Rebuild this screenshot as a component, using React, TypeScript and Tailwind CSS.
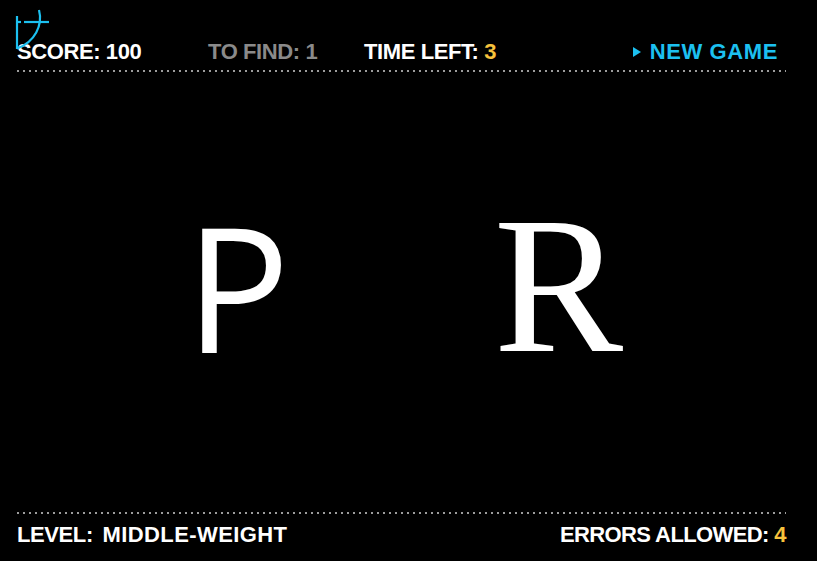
import React from 'react';

const sans = { fontFamily: '"Liberation Sans", Arial, sans-serif' };

const Dots = () => (
  <div className="h-[2px] w-full bg-[linear-gradient(to_right,#9c9c9c_2px,transparent_2px)] bg-[length:6px_2px]" />
);

const Crosshair = () => (
  <svg className="absolute left-0 top-0" width="60" height="52" viewBox="0 0 60 52" fill="none">
    <g stroke="#1cc0f0" strokeWidth="2.2">
      <line x1="17" y1="16" x2="17" y2="49" />
      <line x1="17" y1="22" x2="21" y2="22" />
      <line x1="24" y1="22" x2="49" y2="22" />
      <path d="M39 10 C 43 25 35 42 17 48.5" />
    </g>
  </svg>
);

export default function App() {
  return (
    <div className="relative flex h-screen w-full flex-col overflow-hidden bg-black pl-[17px] pr-[31px] font-bold text-white" style={sans}>
      <Crosshair />

      <div className="flex pt-[40px] text-[22px] leading-[24px] tracking-[-0.4px]">
        <div className="w-[191px]">SCORE: 100</div>
        <div className="w-[156px] text-[#8a8a8a]">TO FIND: 1</div>
        <div className="flex-1">
          TIME LEFT: <span className="text-[#f7c23c]">3</span>
        </div>
        <button className="mr-[8px] flex items-center gap-[9px] tracking-[0.6px] text-[#1cc0f0]">
          <span className="h-0 w-0 border-y-[5px] border-l-[8px] border-y-transparent border-l-[#1cc0f0]" />
          NEW GAME
        </button>
      </div>
      <div className="mt-[6px]">
        <Dots />
      </div>

      <main className="flex flex-1 items-center justify-center pb-[12px]">
        <div className="w-[324px] pr-[4px] text-center font-normal leading-none" style={{ fontFamily: '"Open Sans", sans-serif', fontSize: 174 }}>
          P
        </div>
        <div className="w-[324px] pr-[10px] text-center font-normal leading-none" style={{ fontFamily: '"Liberation Serif", "Times New Roman", serif', fontSize: 194 }}>
          R
        </div>
      </main>

      <Dots />
      <div className="mb-[14px] mt-[9px] flex justify-between text-[22px] leading-[24px] tracking-[-0.4px]">
        <div>
          LEVEL: <span className="ml-[4px] tracking-[0.4px]">MIDDLE-WEIGHT</span>
        </div>
        <div className="tracking-[-0.6px]">
          ERRORS ALLOWED: <span className="text-[#f7c23c]">4</span>
        </div>
      </div>
    </div>
  );
}
